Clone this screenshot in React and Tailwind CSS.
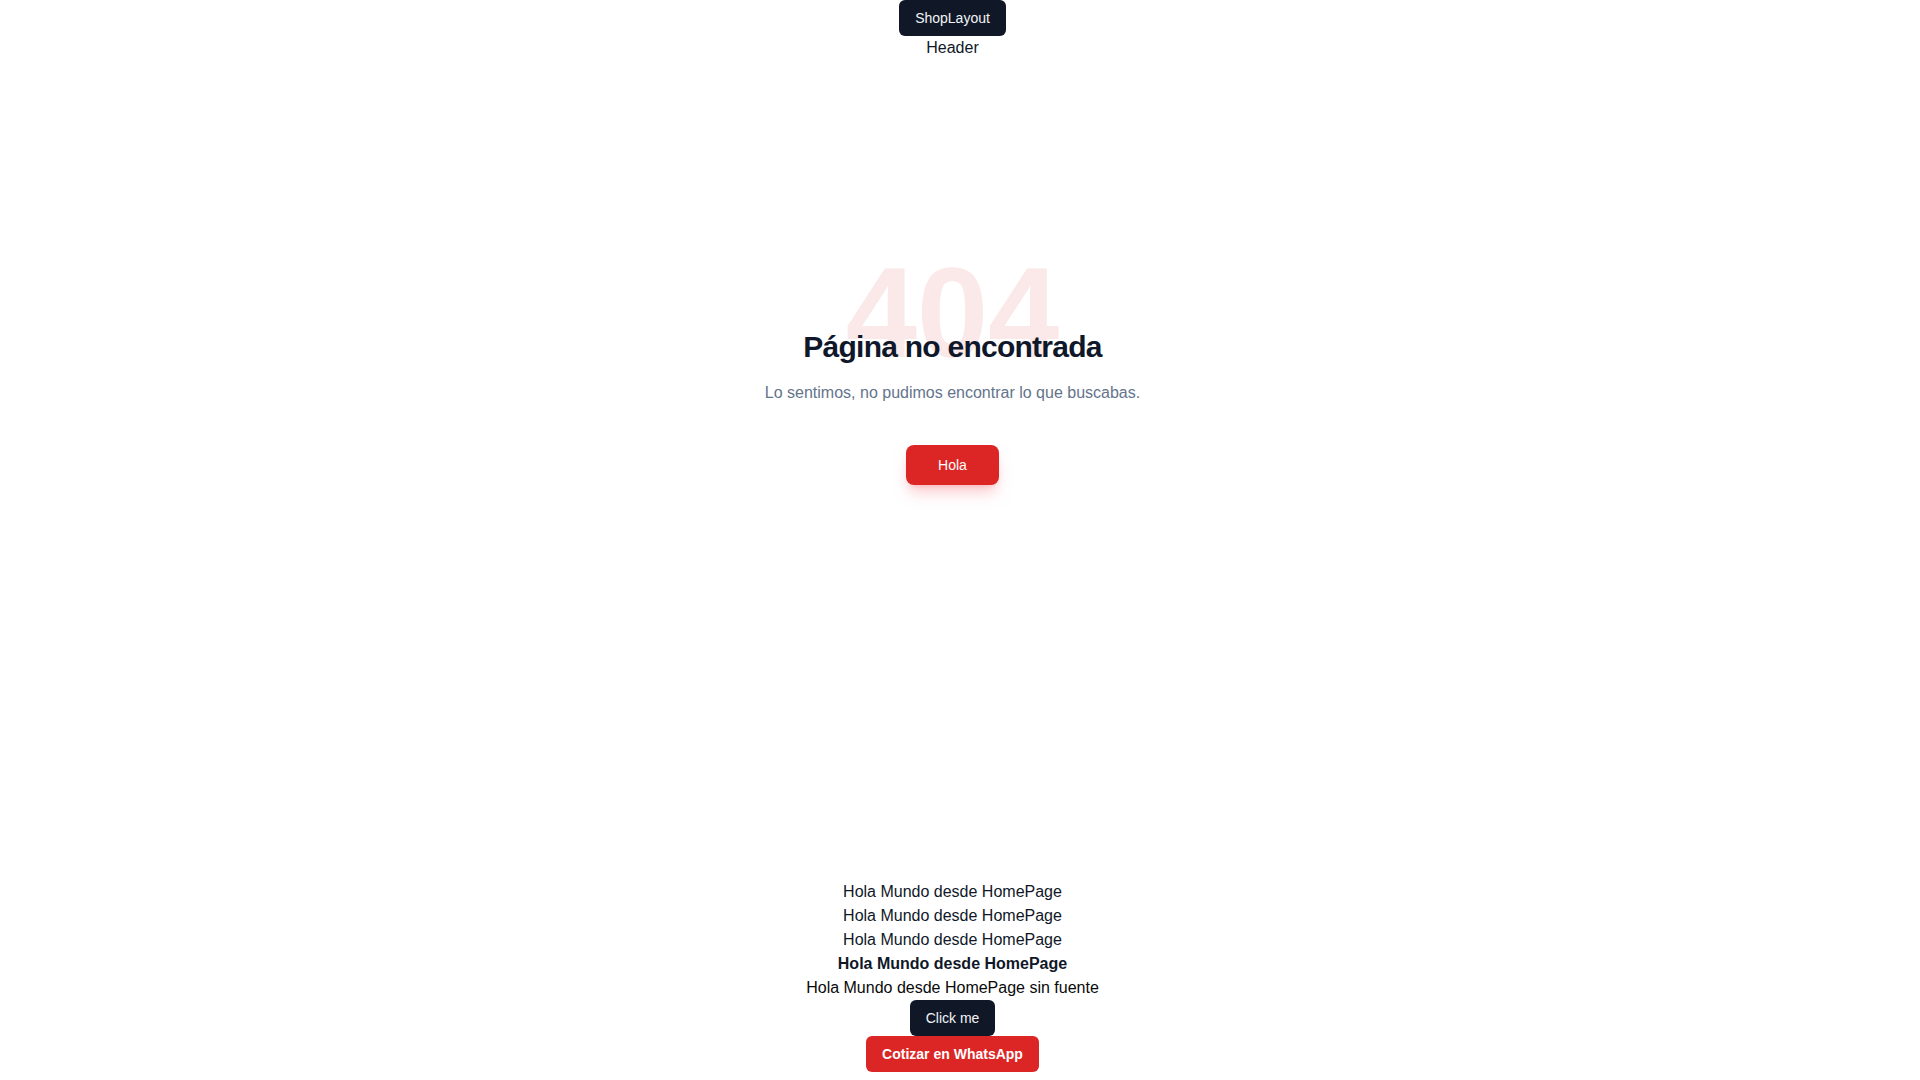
export default function App() {
  return (
    <div className="min-h-screen bg-white pr-[15px] font-['Liberation_Sans',Arial,sans-serif] text-[#101828]">
      <header className="flex flex-col items-center">
        <button className="bg-[#101828] text-gray-100 px-4 py-2 rounded-md text-sm">
          ShopLayout
        </button>
        <p className="text-base leading-6">Header</p>
      </header>

      <section className="h-[820px] flex flex-col items-center pt-[189px] text-center">
        <h1 className="text-9xl font-extrabold text-[#fbe8e8] select-none">404</h1>
        <h2 className="relative -mt-12 text-3xl font-bold tracking-tight text-[#0f172a]">
          Página no encontrada
        </h2>
        <p className="mt-4 text-base text-[#64748b]">
          Lo sentimos, no pudimos encontrar lo que buscabas.
        </p>
        <button className="mt-10 bg-[#dc2626] text-white px-8 py-2.5 rounded-lg text-sm shadow-lg shadow-red-600/20">
          Hola
        </button>
      </section>

      <div className="flex flex-col items-center text-base leading-6">
        <p>Hola Mundo desde HomePage</p>
        <p>Hola Mundo desde HomePage</p>
        <p>Hola Mundo desde HomePage</p>
        <p className="font-bold">Hola Mundo desde HomePage</p>
        <p className="text-[#0a0a0a]">Hola Mundo desde HomePage sin fuente</p>
        <button className="bg-[#101828] text-gray-100 px-4 py-2 rounded-md text-sm">
          Click me
        </button>
        <button className="bg-[#dc2626] text-white px-4 py-2 rounded-md text-sm font-bold">
          Cotizar en WhatsApp
        </button>
      </div>

      <footer className="h-[724px]" />
    </div>
  );
}
